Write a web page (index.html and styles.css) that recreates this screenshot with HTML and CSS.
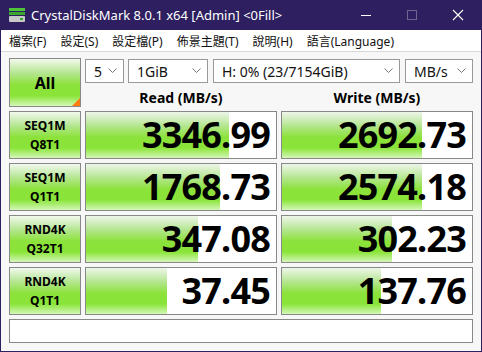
FILE: index.html
```html
<!DOCTYPE html>
<html>
<head>
  <title>CrystalDiskMark</title>
  <link rel="stylesheet" href="styles.css">
</head>
<body>
  <div class="window">
    <!-- Title bar -->
    <div class="titlebar">
      <svg class="app-icon" width="18" height="16" viewBox="0 0 18 16">
        <rect x="1" y="1" width="16" height="3" fill="#4fc43a"/>
        <rect x="1" y="5" width="16" height="3" fill="#3aa82c"/>
        <rect x="1" y="9" width="16" height="6" rx="1" fill="#c8c8c8"/>
        <rect x="12" y="11" width="3" height="2" fill="#3aa82c"/>
      </svg>
      <span class="title">CrystalDiskMark 8.0.1 x64 [Admin] &lt;0Fill&gt;</span>
      <div class="win-controls">
        <svg width="12" height="12" viewBox="0 0 12 12"><line x1="1" y1="6.5" x2="11" y2="6.5" stroke="#fff" stroke-width="1"/></svg>
        <svg width="12" height="12" viewBox="0 0 12 12"><rect x="1.5" y="1.5" width="9" height="9" fill="none" stroke="#6e6590" stroke-width="1"/></svg>
        <svg width="12" height="12" viewBox="0 0 12 12"><path d="M1 1 L11 11 M11 1 L1 11" stroke="#fff" stroke-width="1.1"/></svg>
      </div>
    </div>

    <!-- Menu -->
    <div class="menubar">
      <span>檔案(F)</span>
      <span>設定(S)</span>
      <span>設定檔(P)</span>
      <span>佈景主題(T)</span>
      <span>說明(H)</span>
      <span>語言(Language)</span>
    </div>

    <div class="content">
      <div class="top">
        <div class="btn-all">All<span class="corner"></span></div>
        <div class="top-right">
          <div class="selects">
            <div class="select sel-count">5<svg class="chev" width="9" height="6" viewBox="0 0 9 6"><polyline points="0.5,0.5 4.5,4.5 8.5,0.5" fill="none" stroke="#777"/></svg></div>
            <div class="select sel-size">1GiB<svg class="chev" width="9" height="6" viewBox="0 0 9 6"><polyline points="0.5,0.5 4.5,4.5 8.5,0.5" fill="none" stroke="#777"/></svg></div>
            <div class="select sel-drive">H: 0% (23/7154GiB)<svg class="chev" width="9" height="6" viewBox="0 0 9 6"><polyline points="0.5,0.5 4.5,4.5 8.5,0.5" fill="none" stroke="#777"/></svg></div>
            <div class="select sel-unit">MB/s<svg class="chev" width="9" height="6" viewBox="0 0 9 6"><polyline points="0.5,0.5 4.5,4.5 8.5,0.5" fill="none" stroke="#777"/></svg></div>
          </div>
          <div class="headers">
            <div class="col-head">Read (MB/s)</div>
            <div class="col-head">Write (MB/s)</div>
          </div>
        </div>
      </div>

      <div class="results">
        <div class="label">SEQ1M<br>Q8T1</div>
        <div class="cell"><div class="bar" style="width: 143px"></div><span class="value">3346.99</span></div>
        <div class="cell"><div class="bar" style="width: 140px"></div><span class="value">2692.73</span></div>

        <div class="label">SEQ1M<br>Q1T1</div>
        <div class="cell"><div class="bar" style="width: 134px"></div><span class="value">1768.73</span></div>
        <div class="cell"><div class="bar" style="width: 140px"></div><span class="value">2574.18</span></div>

        <div class="label">RND4K<br>Q32T1</div>
        <div class="cell"><div class="bar" style="width: 112px"></div><span class="value">347.08</span></div>
        <div class="cell"><div class="bar" style="width: 110px"></div><span class="value">302.23</span></div>

        <div class="label">RND4K<br>Q1T1</div>
        <div class="cell"><div class="bar" style="width: 81px"></div><span class="value">37.45</span></div>
        <div class="cell"><div class="bar" style="width: 99px"></div><span class="value">137.76</span></div>
      </div>

      <div class="comment"></div>
    </div>
  </div>
</body>
</html>
```

FILE: styles.css
```css
body {
  margin: 0;
  font-family: 'Noto Sans', 'Noto Sans CJK TC', sans-serif;
  background-color: #2e2060;
}

.window {
  width: 480px;
  height: 351px;
  border: 1px solid #2e2060;
  border-top: none;
  background-color: #f7f7f7;
}

.titlebar {
  height: 30px;
  background-color: #2e2060;
  display: flex;
  align-items: center;
  color: #fff;
}

.app-icon {
  margin-left: 7px;
  margin-right: 5px;
}

.title {
  font-size: 13px;
  flex: 1;
}

.win-controls {
  display: flex;
  align-items: center;
  gap: 34px;
  margin-right: 17px;
}

.menubar {
  height: 21px;
  background-color: #fff;
  border-bottom: 1px solid #d8d8d8;
  display: flex;
  align-items: center;
  font-size: 12px;
  color: #111;
  padding-left: 8px;
  gap: 14px;
}

.content {
  padding: 6px 8px 8px 8px;
}

.top {
  display: flex;
  gap: 4px;
  height: 49px;
}

.btn-all {
  position: relative;
  width: 70px;
  height: 47px;
  border: 1px solid #888;
  background: linear-gradient(to bottom, #f2f8ee 0%, #b4e690 30%, #8ce23a 55%, #8ae438 78%, #d4f7b8 100%);
  display: flex;
  justify-content: center;
  align-items: center;
  font-weight: bold;
  font-size: 16px;
}

.corner {
  position: absolute;
  right: 0;
  bottom: 0;
  width: 0;
  height: 0;
  border-left: 8px solid transparent;
  border-bottom: 8px solid #ff7a10;
}

.top-right {
  flex: 1;
  display: flex;
  flex-direction: column;
}

.selects {
  display: flex;
  margin-top: 1px;
  height: 24px;
}

.select {
  box-sizing: border-box;
  height: 24px;
  border: 1px solid #999;
  background-color: #fff;
  display: flex;
  align-items: center;
  justify-content: space-between;
  padding: 0 6px 0 8px;
  font-size: 14px;
  color: #111;
}

.sel-count { width: 39px; }
.sel-size { width: 80px; margin-left: 4px; }
.sel-drive { width: 187px; margin-left: 5px; }
.sel-unit { width: 68px; margin-left: 5px; }

.headers {
  display: flex;
  gap: 4px;
  margin-top: 6px;
}

.col-head {
  width: 192px;
  text-align: center;
  font-weight: bold;
  font-size: 14px;
  line-height: 18px;
}

.results {
  display: grid;
  grid-template-columns: 72px 192px 192px;
  grid-auto-rows: 48px;
  gap: 4px;
  margin-top: 4px;
}

.label {
  border: 1px solid #888;
  background: linear-gradient(to bottom, #f2f8ee 0%, #b4e690 30%, #8ce23a 55%, #8ae438 78%, #d4f7b8 100%);
  display: flex;
  align-items: center;
  justify-content: center;
  text-align: center;
  font-weight: bold;
  font-size: 12px;
  line-height: 19px;
}

.cell {
  position: relative;
  border: 1px solid #888;
  background-color: #fff;
  display: flex;
  align-items: center;
  justify-content: flex-end;
  overflow: hidden;
}

.bar {
  position: absolute;
  left: 0;
  top: 0;
  bottom: 0;
  background: linear-gradient(to bottom, #eef6ea 0%, #b4e690 30%, #8ce23a 55%, #8ae438 78%, #d4f7b8 100%);
}

.value {
  position: relative;
  font-size: 36px;
  font-weight: bold;
  letter-spacing: -0.8px;
  padding-right: 6px;
  line-height: 1;
}

.comment {
  margin-top: 4px;
  height: 22px;
  border: 1px solid #888;
  background-color: #fff;
}
```
